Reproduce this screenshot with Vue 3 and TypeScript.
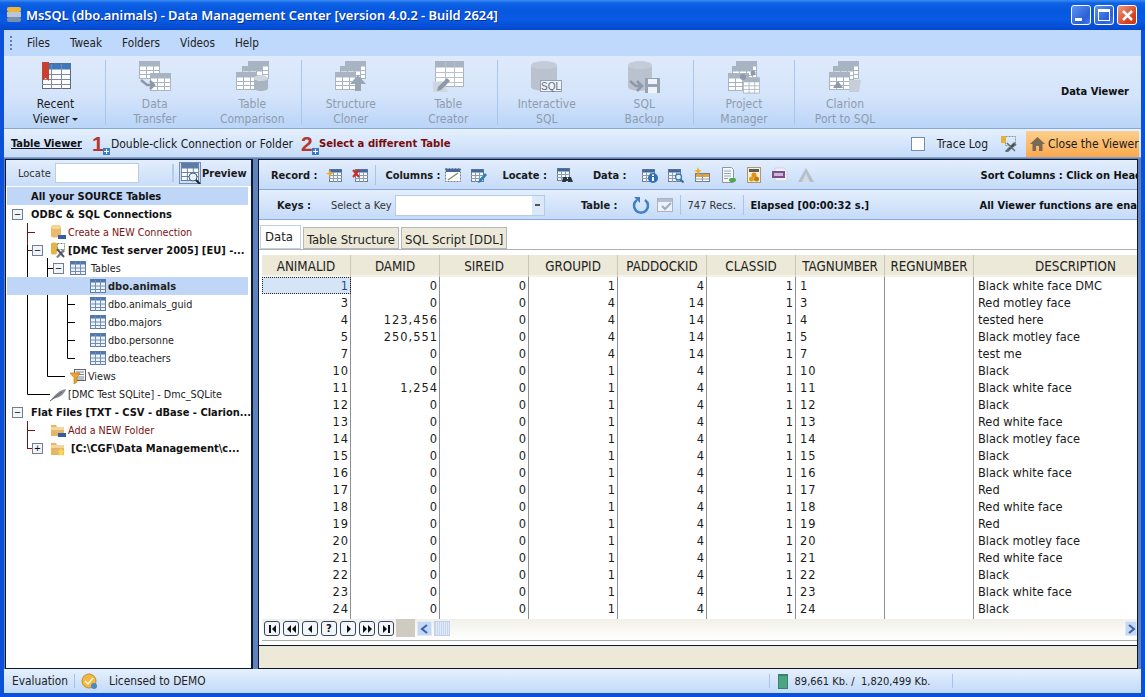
<script setup lang="ts">
interface RibbonItem {
  lines: [string, string]
  icon: string
  active?: boolean
  caret?: boolean
}

interface TreeRow {
  text: string
  x: number
  expander?: { x: number; open: boolean }
  icon?: string
  gap?: number
  kind?: 'bold' | 'link' | 'selected' | 'title'
}

const ribbonGroups: { width: number; items: RibbonItem[] }[] = [
  { width: 100, items: [{ lines: ['Recent', 'Viewer'], icon: 'r-recent', active: true, caret: true }] },
  {
    width: 196,
    items: [
      { lines: ['Data', 'Transfer'], icon: 'r-transfer' },
      { lines: ['Table', 'Comparison'], icon: 'r-compare' }
    ]
  },
  {
    width: 196,
    items: [
      { lines: ['Structure', 'Cloner'], icon: 'r-cloner' },
      { lines: ['Table', 'Creator'], icon: 'r-creator' }
    ]
  },
  {
    width: 196,
    items: [
      { lines: ['Interactive', 'SQL'], icon: 'r-sql' },
      { lines: ['SQL', 'Backup'], icon: 'r-backup' }
    ]
  },
  { width: 101, items: [{ lines: ['Project', 'Manager'], icon: 'r-project' }] },
  { width: 100, items: [{ lines: ['Clarion', 'Port to SQL'], icon: 'r-clarion' }] }
]

const treeRows: TreeRow[] = [
  { text: 'All your SOURCE Tables', x: 31, kind: 'title' },
  { text: 'ODBC & SQL Connections', x: 31, kind: 'bold', expander: { x: 12, open: true } },
  { text: 'Create a NEW Connection', x: 50, icon: 's-db', kind: 'link' },
  { text: '[DMC Test server 2005] [EU] -...', x: 50, icon: 's-server', kind: 'bold', expander: { x: 32, open: true } },
  { text: 'Tables', x: 70, icon: 's-grid', gap: 5, expander: { x: 53, open: true } },
  { text: 'dbo.animals', x: 90, icon: 's-grid', kind: 'selected' },
  { text: 'dbo.animals_guid', x: 90, icon: 's-grid' },
  { text: 'dbo.majors', x: 90, icon: 's-grid' },
  { text: 'dbo.personne', x: 90, icon: 's-grid' },
  { text: 'dbo.teachers', x: 90, icon: 's-grid' },
  { text: 'Views', x: 70, icon: 's-views' },
  { text: '[DMC Test SQLite] - Dmc_SQLite', x: 50, icon: 's-feather' },
  { text: 'Flat Files [TXT - CSV - dBase - Clarion...', x: 31, kind: 'bold', expander: { x: 12, open: true } },
  { text: 'Add a NEW Folder', x: 50, icon: 's-folder', kind: 'link' },
  { text: '[C:\\CGF\\Data Management\\c...', x: 50, icon: 's-folder-star', gap: 5, kind: 'bold', expander: { x: 32, open: false } }
]

const columns = ['ANIMALID', 'DAMID', 'SIREID', 'GROUPID', 'PADDOCKID', 'CLASSID', 'TAGNUMBER', 'REGNUMBER', 'DESCRIPTION']

const bw = 'Black white face'
const rows: [number, string, number, number, string][] = [
  [1, '0', 1, 4, 'Black white face DMC'],
  [3, '0', 4, 14, 'Red motley face'],
  [4, '123,456', 4, 14, 'tested here'],
  [5, '250,551', 4, 14, 'Black motley face'],
  [7, '0', 4, 14, 'test me'],
  [10, '0', 1, 4, 'Black'],
  [11, '1,254', 1, 4, bw],
  [12, '0', 1, 4, 'Black'],
  [13, '0', 1, 4, 'Red white face'],
  [14, '0', 1, 4, 'Black motley face'],
  [15, '0', 1, 4, 'Black'],
  [16, '0', 1, 4, bw],
  [17, '0', 1, 4, 'Red'],
  [18, '0', 1, 4, 'Red white face'],
  [19, '0', 1, 4, 'Red'],
  [20, '0', 1, 4, 'Black motley face'],
  [21, '0', 1, 4, 'Red white face'],
  [22, '0', 1, 4, 'Black'],
  [23, '0', 1, 4, bw],
  [24, '0', 1, 4, 'Black']
]

const navPaths = [
  'M1 1h2v8H1zM8 1v8L4 5z',
  'M4 1v8L0 5zM9 1v8L5 5z',
  'M6 1v8L2 5z',
  '',
  'M3 1v8l4-4z',
  'M0 1v8l4-4zM5 1v8l4-4z',
  'M1 1v8l4-4zM6 1h2v8H6z'
]
const dataIcons = ['t-info', 't-find', 't-add2', 't-doc', 't-xml', 't-csv', 't-tri']
</script>

<template>
  <div class="window">
    <svg class="sprite" width="0" height="0">
      <defs>
        <g id="tbl">
          <rect x="0.5" y="0.5" width="20" height="17" fill="#fff" stroke="currentColor" />
          <rect x="0.5" y="0.5" width="20" height="5" fill="currentColor" />
          <path d="M0 9.5h20M0 13.5h20M7.5 0v18M14.5 0v18" stroke="currentColor" fill="none" />
        </g>
        <symbol id="r-recent" viewBox="0 0 34 34">
          <rect x="3.500" y="3.500" width="28" height="25" fill="#fff" stroke="#5c6b80" />
          <rect x="3.500" y="3.500" width="28" height="6" fill="#3d78bd" />
          <path d="M3 14.500h28M3 19.500h28M3 24.500h28M12.500 4v25M22.500 4v25" stroke="#7d8a9c" fill="none" />
          <path d="M3 2h7v19l-3.500-3-3.500 3z" fill="#c8402f" />
        </symbol>
        <symbol id="r-transfer" viewBox="0 0 34 34">
          <g color="#a9b4c2"><use href="#tbl" x="1" y="1" /><use href="#tbl" x="12" y="13" /></g>
          <path d="M3 20l6 5h7M12 21l4 4-4 4" fill="none" stroke="#8d99a9" stroke-width="2.500" />
        </symbol>
        <symbol id="r-compare" viewBox="0 0 34 34">
          <g color="#a9b4c2"><use href="#tbl" x="13" y="1" /><use href="#tbl" x="7" y="6" /><use href="#tbl" x="1" y="12" /></g>
          <ellipse cx="26" cy="18" rx="7" ry="3" fill="#cfd6df" />
          <path d="M19 18v10c0 4 14 4 14 0V18c0 4-14 4-14 0z" fill="#a9b4c2" />
        </symbol>
        <symbol id="r-cloner" viewBox="0 0 34 34">
          <g color="#a9b4c2"><use href="#tbl" x="11" y="1" /><use href="#tbl" x="6" y="6" /><use href="#tbl" x="1" y="12" /></g>
          <path d="M24 15l8 9h-5v7h-6v-7h-5z" fill="#98a5b5" />
        </symbol>
        <symbol id="r-creator" viewBox="0 0 34 34">
          <rect x="4.500" y="1.500" width="28" height="25" fill="#fff" stroke="#a9b4c2" />
          <rect x="4.500" y="1.500" width="28" height="6" fill="#a9b4c2" />
          <path d="M4 12.500h28M4 17.500h28M4 22.500h28M14.500 2v25M23.500 2v25" stroke="#b8c1cd" fill="none" />
          <path d="M2 22l9-1 6 11H2z" fill="#cfd6df" />
          <path d="M7 27l9-9 3 3-9 9-4 1z" fill="#8d99a9" />
        </symbol>
        <symbol id="r-sql" viewBox="0 0 34 34">
          <ellipse cx="14" cy="5" rx="13" ry="4" fill="#c4ccd7" />
          <path d="M1 5v22c0 5 26 5 26 0V5c0 5-26 5-26 0z" fill="#b9c2ce" />
          <rect x="10.500" y="20.500" width="21" height="11" fill="#eef3f9" stroke="#94a0af" />
          <text x="21" y="30" text-anchor="middle" font-size="10" font-family="Liberation Sans" fill="#5f6c7c">SQL</text>
        </symbol>
        <symbol id="r-backup" viewBox="0 0 34 34">
          <ellipse cx="13" cy="5" rx="12" ry="4" fill="#c4ccd7" />
          <path d="M1 5v22c0 5 24 5 24 0V5c0 5-24 5-24 0z" fill="#b9c2ce" />
          <path d="M3 21l6 5h6M10 21l5 5-5 5" fill="none" stroke="#8d99a9" stroke-width="2.500" />
          <rect x="18" y="18" width="15" height="15" fill="#97a3b3" />
          <rect x="21" y="19" width="9" height="5" fill="#eef3f9" />
          <rect x="21" y="27" width="9" height="6" fill="#eef3f9" />
        </symbol>
        <symbol id="r-project" viewBox="0 0 34 34">
          <g color="#a9b4c2"><use href="#tbl" x="9" y="1" /><use href="#tbl" x="5" y="6" /><use href="#tbl" x="1" y="13" /><use href="#tbl" x="17" y="17" transform="translate(2.500 2) scale(.8 .9)" /></g>
          <circle cx="16" cy="17" r="3" fill="#8d99a9" />
          <circle cx="26" cy="13" r="2.500" fill="#8d99a9" />
        </symbol>
        <symbol id="r-clarion" viewBox="0 0 34 34">
          <g color="#a9b4c2"><use href="#tbl" x="10" y="1" /><use href="#tbl" x="5" y="6" /><use href="#tbl" x="1" y="12" /></g>
          <path d="M10 21l5 7H5z" fill="#8d99a9" />
          <path d="M21 20h12l-2 12H21z" fill="#c5ced9" />
        </symbol>
        <symbol id="s-grid" viewBox="0 0 16 16">
          <rect x=".5" y="1.500" width="15" height="13" fill="#eef3fa" stroke="#5d7ba6" />
          <rect x=".5" y="1.500" width="15" height="3" fill="#4f78ad" />
          <path d="M0 8h16M0 11.500h16M5.500 2v13M10.500 2v13" stroke="#6f8db5" fill="none" />
        </symbol>
        <symbol id="s-db" viewBox="0 0 16 16">
          <path d="M1 3c0-3 10-3 10 0v9c0 2-10 2-10 0z" fill="#eab96a" />
          <ellipse cx="6" cy="3" rx="5" ry="2" fill="#f6d89b" />
          <rect x="8" y="11" width="8" height="4" fill="#2f5fa8" />
        </symbol>
        <symbol id="s-server" viewBox="0 0 16 16">
          <path d="M1 2c0-2 6-2 6 0v9c0 2-6 2-6 0z" fill="#e7b143" />
          <rect x="7.500" y="1.500" width="7" height="6" fill="none" stroke="#6a9a6a" stroke-dasharray="2 1" />
          <path d="M6 15l7-8 2 2-7 7z" fill="#77808a" />
          <path d="M7 7l7 8" stroke="#4d565f" stroke-width="2" />
        </symbol>
        <symbol id="s-views" viewBox="0 0 16 16">
          <rect x="4.500" y="1.500" width="11" height="11" fill="#f3f5f8" stroke="#5d6570" />
          <path d="M6 4h8M6 6.500h8M6 9h8M6 11h8" stroke="#7d8792" />
          <path d="M0 5h10L7 9.500V14l-3 2V9.500z" fill="#f0a42a" stroke="#b86f0a" stroke-width=".6" />
        </symbol>
        <symbol id="s-feather" viewBox="0 0 16 16">
          <path d="M1 14C5 8 10 4 16 3c-1 4-5 8-10 9l-3 1z" fill="#8a8f96" />
          <path d="M0 15L12 6" stroke="#5d6267" />
        </symbol>
        <symbol id="s-folder" viewBox="0 0 16 16">
          <path d="M1 3h5l1 2h7v9H1z" fill="#e6b566" />
          <rect x="1" y="5" width="13" height="3" fill="#f3d59d" />
          <rect x="8" y="11" width="8" height="4" fill="#2f5fa8" />
        </symbol>
        <symbol id="s-folder-star" viewBox="0 0 16 16">
          <path d="M1 3h5l1 2h7v10H1z" fill="#e6b566" />
          <rect x="1" y="5" width="13" height="3" fill="#f3d59d" />
          <path d="M11 8l1.300 2.600 2.700.4-2 2 .5 3-2.500-1.400L8.500 16l.5-3-2-2 2.700-.4z" fill="#f8d65a" />
        </symbol>
        <g id="mini">
          <rect x="3.500" y="2.500" width="12" height="12" fill="#f4f7fb" stroke="#6c7f99" />
          <rect x="3.500" y="2.500" width="12" height="3" fill="#41679c" />
          <path d="M3 8.500h13M3 11.500h13M7.500 5v10M11.500 5v10" stroke="#8a9bb3" fill="none" />
        </g>
        <symbol id="t-add" viewBox="0 0 16 16">
          <use href="#mini" />
          <path d="M4 2l1 3.500 3 1-3 1-1 3.500-1-3.500-3-1 3-1z" fill="#f4a81c" />
        </symbol>
        <symbol id="t-del" viewBox="0 0 16 16">
          <use href="#mini" />
          <path d="M1 3l6 7M7 3l-6 7" stroke="#cf2a1f" stroke-width="2" />
        </symbol>
        <symbol id="t-col1" viewBox="0 0 16 16">
          <rect x=".5" y="1.500" width="15" height="13" fill="#fff" stroke="#6c7f99" stroke-dasharray="2 1" />
          <rect x="1" y="2" width="14" height="3" fill="#41679c" />
          <path d="M3 13l10-7" stroke="#8a9060" stroke-width="1.500" />
        </symbol>
        <symbol id="t-col2" viewBox="0 0 16 16">
          <use href="#mini" transform="translate(-3 0)" />
          <path d="M8 13l6-7 2 2-6 7-3 1z" fill="#2f7fc4" />
        </symbol>
        <symbol id="t-locate" viewBox="0 0 16 16">
          <use href="#mini" transform="translate(-3 -1)" />
          <path d="M6 10h4v2h1v-2h3l2 5h-5v-1h-2v1H5z" fill="#2a3442" />
        </symbol>
        <symbol id="t-info" viewBox="0 0 16 16">
          <use href="#mini" transform="translate(-3 0)" />
          <circle cx="11" cy="11" r="5" fill="#2c6fb8" />
          <rect x="10" y="10" width="2" height="4" fill="#fff" />
          <rect x="10" y="7.500" width="2" height="1.500" fill="#fff" />
        </symbol>
        <symbol id="t-find" viewBox="0 0 16 16">
          <use href="#mini" transform="translate(-3 0)" />
          <circle cx="10.500" cy="10" r="3" fill="#dff0fb" stroke="#3a7ab8" stroke-width="1.300" />
          <path d="M12.500 12.500l3 3" stroke="#3a6a9c" stroke-width="2" />
        </symbol>
        <symbol id="t-add2" viewBox="0 0 16 16">
          <rect x="1.500" y="6.500" width="14" height="8" fill="#fff" stroke="#6c7f99" />
          <rect x="2" y="7" width="13" height="3" fill="#e2a23a" />
          <path d="M8.500 7v8M1 12h14" stroke="#8a9bb3" />
          <path d="M4 0l1 3 3 1-3 1-1 3-1-3-3-1 3-1z" fill="#f4a81c" />
        </symbol>
        <symbol id="t-doc" viewBox="0 0 16 16">
          <path d="M2.500 .5h9l2 2v13h-11z" fill="#f5f7fa" stroke="#8c96a3" />
          <path d="M4 4h7M4 6.500h7M4 9h7M4 11.500h4" stroke="#97a3b3" />
          <rect x="9" y="11" width="7" height="4" rx="2" fill="#4aa84a" />
        </symbol>
        <symbol id="t-xml" viewBox="0 0 16 16">
          <rect x="1.500" y=".5" width="13" height="15" fill="#f9eed0" stroke="#a59a7e" />
          <rect x="3" y="2" width="10" height="3" fill="#5a5a5a" />
          <circle cx="8" cy="8" r="2.500" fill="#e48f14" />
          <circle cx="5.500" cy="12" r="2.500" fill="#d9a11e" />
          <circle cx="10.500" cy="12" r="2.500" fill="#c27a10" />
        </symbol>
        <symbol id="t-csv" viewBox="0 0 16 16">
          <path d="M3 1h9l3 3v10H3z" fill="#eceff5" stroke="#c2c8d2" stroke-width=".6" />
          <rect x="0" y="4" width="13" height="7" fill="#7e4f8f" />
          <rect x="2" y="6" width="9" height="3" fill="#cdb7d6" />
        </symbol>
        <symbol id="t-tri" viewBox="0 0 16 16">
          <path d="M8 1l8 14H0z" fill="#b4bfcd" />
          <path d="M8 6l4 9H4z" fill="#d2dae4" />
        </symbol>
        <symbol id="t-check" viewBox="0 0 16 16">
          <rect x=".5" y="1.500" width="15" height="13" fill="#eef2f8" stroke="#a8b5c6" />
          <rect x="1" y="2" width="14" height="3" fill="#b4c0d0" />
          <path d="M5 9l3 3 6-6" fill="none" stroke="#9dacc0" stroke-width="2" />
        </symbol>
      </defs>
    </svg>

    <header class="titlebar">
      <svg class="app-icon" width="18" height="18" viewBox="0 0 18 18">
        <rect x="1" y="1" width="14" height="5" rx="2" fill="#f0b43c" />
        <rect x="1" y="6" width="14" height="5" fill="#b9c6d6" />
        <rect x="1" y="11" width="14" height="5" rx="2" fill="#7b8fae" />
      </svg>
      <span class="title-text">MsSQL (dbo.animals) - Data Management Center [version 4.0.2 - Build 2624]</span>
      <div class="win-buttons">
        <button class="win-btn"><span class="min-glyph"></span></button>
        <button class="win-btn"><span class="max-glyph"></span></button>
        <button class="win-btn close">
          <svg width="13" height="13" viewBox="0 0 13 13"><path d="M2 2l9 9M11 2l-9 9" stroke="#fff" stroke-width="2.500" /></svg>
        </button>
      </div>
    </header>

    <nav class="menubar">
      <span class="grip"></span>
      <span class="menu-item">Files</span>
      <span class="menu-item">Tweak</span>
      <span class="menu-item">Folders</span>
      <span class="menu-item">Videos</span>
      <span class="menu-item">Help</span>
    </nav>

    <section class="ribbon">
      <div
        v-for="(group, g) in ribbonGroups"
        :key="g"
        class="ribbon-group"
        :class="{ last: g === ribbonGroups.length - 1 }"
        :style="{ width: group.width + 'px' }"
      >
        <div
          v-for="item in group.items"
          :key="item.icon"
          class="ribbon-item"
          :class="{ active: item.active }"
        >
          <svg class="ribbon-icon" width="34" height="34"><use :href="'#' + item.icon" /></svg>
          <span>{{ item.lines[0] }}</span>
          <span>{{ item.lines[1] }}<i v-if="item.caret" class="caret"></i></span>
        </div>
      </div>
      <span class="ribbon-caption">Data Viewer</span>
    </section>

    <section class="stepbar">
      <span class="step-title">Table Viewer</span>
      <span class="step-num first">1<i class="plus"></i></span>
      <span class="step-text">Double-click Connection or Folder</span>
      <span class="step-num second">2<i class="plus"></i></span>
      <span class="step-text alert">Select a different Table</span>
      <span class="check"></span>
      <span class="trace">Trace Log</span>
      <svg class="trace-icon" width="17" height="17" viewBox="0 0 17 17">
        <rect x="5.500" y="1.500" width="10" height="9" fill="none" stroke="#7f9a7f" stroke-dasharray="2 1" />
        <rect x="1" y="1" width="5" height="7" fill="#e6b03c" />
        <path d="M6 16l8-8 1.500 1.500-8 7zM7 8l8 8" stroke="#666e78" stroke-width="1.500" />
      </svg>
      <button class="close-viewer">
        <svg width="17" height="16" viewBox="0 0 17 16"><path d="M8.500 1L1 8h2.500v7h3.500v-5h3v5h3.500V8H16z" fill="#7a6a55" /></svg>
        Close the Viewer
      </button>
    </section>

    <main class="content">
      <aside class="left-panel">
        <div class="locate-bar">
          <span class="locate-label">Locate</span>
          <input class="locate-input" type="text" />
          <span class="locate-sep"></span>
          <svg class="preview-icon" width="22" height="22" viewBox="0 0 22 22">
            <rect x=".5" y=".5" width="21" height="21" fill="#cfe0f5" stroke="#6f8db5" />
            <g transform="translate(2 1)"><use href="#tbl" transform="scale(.85 1)" color="#5d7ba6" /></g>
            <circle cx="14" cy="15" r="4" fill="#e8f2fb" stroke="#44607f" />
            <path d="M17 18l4 4" stroke="#222" stroke-width="2" />
          </svg>
          <strong class="preview-text">Preview</strong>
        </div>
        <div class="tree">
          <svg class="tree-lines" width="80" height="300">
            <g transform="translate(-6 -186)" fill="none">
              <path d="M27.500 223v22M27 232.500h8M27 250.500h5" stroke="#7a1414" />
              <path d="M27.500 245v149.500H50M47.500 258v118.500H65M47 268.500h6M67.500 277v81.500H75M67 286.500h8M67 304.500h8M67 322.500h8M67 340.500h8" stroke="#000" />
              <path d="M27.500 421v27M27 430.500h8M27 448.500h5" stroke="#7a1414" />
            </g>
          </svg>
          <div
            v-for="row in treeRows"
            :key="row.text"
            class="tree-row"
            :class="row.kind"
            :style="{ paddingLeft: row.x - 7 + 'px' }"
          >
            <span v-if="row.expander" class="expander" :style="{ left: row.expander.x - 7 + 'px' }">
              {{ row.expander.open ? '−' : '+' }}
            </span>
            <svg
              v-if="row.icon"
              class="tree-icon"
              width="16"
              height="16"
              :style="{ marginRight: (row.gap ?? 2) + 'px' }"
            >
              <use :href="'#' + row.icon" />
            </svg>
            <span class="tree-text">{{ row.text }}</span>
          </div>
        </div>
      </aside>

      <section class="right-panel">
        <div class="toolbar">
          <b class="tool-label record">Record :</b>
          <svg class="tool after-record" width="16" height="16"><use href="#t-add" /></svg>
          <svg class="tool" width="16" height="16"><use href="#t-del" /></svg>
          <span class="tool-sep"></span>
          <b class="tool-label columns">Columns :</b>
          <svg class="tool near" width="16" height="16"><use href="#t-col1" /></svg>
          <svg class="tool" width="16" height="16"><use href="#t-col2" /></svg>
          <b class="tool-label wide">Locate :</b>
          <svg class="tool" width="16" height="16"><use href="#t-locate" /></svg>
          <b class="tool-label data-label">Data :</b>
          <svg
            v-for="(icon, n) in dataIcons"
            :key="icon"
            class="tool"
            :class="{ 'after-data': n === 0 }"
            width="16"
            height="16"
          >
            <use :href="'#' + icon" />
          </svg>
          <b class="tool-note sort">Sort Columns : Click on Header</b>
        </div>
        <div class="toolbar">
          <b class="tool-label keys">Keys :</b>
          <span class="key-label">Select a Key</span>
          <div class="key-select"><span class="key-arrow"></span></div>
          <b class="tool-label table-label">Table :</b>
          <svg class="refresh" width="18" height="18" viewBox="0 0 18 18">
            <path d="M5 4a7 7 0 1 0 8 0" fill="none" stroke="#3f7fc4" stroke-width="2.500" />
            <path d="M2 1h6v6z" fill="#3f7fc4" />
          </svg>
          <svg class="tool check-tool" width="16" height="16"><use href="#t-check" /></svg>
          <span class="tool-sep"></span>
          <span class="recs">747 Recs.</span>
          <span class="tool-sep"></span>
          <b class="elapsed">Elapsed [00:00:32 s.]</b>
          <b class="tool-note enabled">All Viewer functions are enabled</b>
        </div>

        <div class="tabs">
          <span class="tab current">Data</span>
          <span class="tab">Table Structure</span>
          <span class="tab">SQL Script [DDL]</span>
        </div>

        <div class="grid-wrap">
          <div class="grid-row head">
            <span v-for="col in columns" :key="col" class="head-cell">{{ col }}</span>
          </div>
          <div v-for="(row, i) in rows" :key="row[0]" class="grid-row" :class="{ tail: i === rows.length - 1 }">
            <span class="cell num" :class="{ focus: i === 0 }">{{ row[0] }}</span>
            <span class="cell num">{{ row[1] }}</span>
            <span class="cell num">0</span>
            <span class="cell num">{{ row[2] }}</span>
            <span class="cell num">{{ row[3] }}</span>
            <span class="cell num">1</span>
            <span class="cell tag">{{ row[0] }}</span>
            <span class="cell"></span>
            <span class="cell">{{ row[4] }}</span>
          </div>
          <div class="grid-nav">
            <div class="nav-buttons">
              <button v-for="(d, n) in navPaths" :key="n" class="nav-btn">
                <svg v-if="d" width="9" height="10" viewBox="0 0 9 10"><path :d="d" fill="#111" /></svg>
                <template v-else>?</template>
              </button>
            </div>
            <span class="nav-fill"></span>
            <span class="scroll-btn">
              <svg width="9" height="10" viewBox="0 0 9 10"><path d="M7 1L2 5l5 4" fill="none" stroke="#3d5fa8" stroke-width="2" /></svg>
            </span>
            <span class="scroll-thumb"></span>
            <span class="scroll-track"></span>
            <span class="scroll-btn end">
              <svg width="9" height="10" viewBox="0 0 9 10"><path d="M2 1l5 4-5 4" fill="none" stroke="#3d5fa8" stroke-width="2" /></svg>
            </span>
          </div>
        </div>
        <div class="bottom-panel"></div>
      </section>
    </main>

    <footer class="statusbar">
      <span class="eval">Evaluation</span>
      <span class="status-sep"></span>
      <svg class="seal" width="17" height="17" viewBox="0 0 17 17">
        <circle cx="8" cy="8" r="7" fill="#eeb94a" stroke="#c98d22" />
        <path d="M4 8l3 3 5-6" fill="none" stroke="#fff3c8" stroke-width="1.500" />
        <circle cx="13" cy="13" r="3" fill="#4a86c8" />
      </svg>
      <span class="licensed">Licensed to DEMO</span>
      <span class="status-sep mem-start"></span>
      <span class="battery"></span>
      <span class="memory">89,661 Kb. /&nbsp; 1,820,499 Kb.</span>
      <span class="status-sep mem-end"></span>
    </footer>
  </div>
</template>

<style>
html,
body {
  margin: 0;
  overflow: hidden;
}
</style>

<style scoped>
.window {
  width: 1145px;
  height: 697px;
  box-sizing: border-box;
  padding: 0 4px 4px;
  display: flex;
  flex-direction: column;
  background: #0a50d8;
  font-family: "DejaVu Sans Condensed", "Noto Sans", sans-serif;
  font-size: 12px;
  color: #1a1a1a;
  overflow: hidden;
  position: relative;
}

.sprite {
  position: absolute;
}

.titlebar {
  height: 30px;
  margin: 0 -4px;
  padding: 0 8px 0 6px;
  flex: none;
  display: flex;
  align-items: center;
  background: linear-gradient(#3b8cf2 0, #0f62e4 3px, #0658e0 10px, #0a5be4 20px, #0346cc 30px);
}

.title-text {
  margin-left: 2px;
  color: #fff;
  font-family: "Noto Sans", sans-serif;
  font-size: 12.9px;
  font-weight: 600;
  text-shadow: 1px 1px 0 #0a2f94;
  white-space: nowrap;
}

.win-buttons {
  margin-left: auto;
  display: flex;
  gap: 3px;
}

.win-btn {
  width: 20px;
  height: 20px;
  padding: 0;
  border: 1px solid #fff;
  border-radius: 3px;
  display: flex;
  align-items: center;
  justify-content: center;
  background: linear-gradient(135deg, #5f93ee, #2a5fd8 70%, #4a7ee8);
}

.win-btn.close {
  background: linear-gradient(135deg, #ee9a80, #d8401f 70%, #c8381a);
}

.min-glyph {
  width: 7px;
  height: 3px;
  margin: 9px 6px 0 0;
  background: #fff;
}

.max-glyph {
  width: 10px;
  height: 8px;
  border: 1px solid #fff;
  border-top-width: 3px;
}

.menubar {
  height: 26px;
  flex: none;
  display: flex;
  align-items: center;
  background: #bed9fb;
  font-size: 11.7px;
}

.grip {
  width: 2px;
  height: 14px;
  margin: 0 0 0 6px;
  border-left: 2px dotted #5d82b8;
}

.menu-item {
  margin-left: 20px;
  color: #222;
}

.grip + .menu-item {
  margin-left: 13px;
}

.ribbon {
  height: 73px;
  flex: none;
  box-sizing: border-box;
  display: flex;
  align-items: stretch;
  padding: 4px 0 3px 2px;
  background: linear-gradient(#dfeafb, #d4e4fa 55%, #bad5f8);
  border-bottom: 1px solid #86a9dc;
}

.ribbon-group {
  flex: none;
  display: flex;
  justify-content: space-around;
  box-sizing: border-box;
  border-right: 1px solid #a9c6ec;
}

.ribbon-group.last {
  border-right: 0;
}

.ribbon-item {
  width: 96px;
  display: flex;
  flex-direction: column;
  align-items: center;
  color: #8e9bad;
  line-height: 15px;
}

.ribbon-item.active {
  color: #1a1a1a;
}

.ribbon-icon {
  margin-bottom: 3px;
  flex: none;
}

.caret {
  display: inline-block;
  margin-left: 3px;
  vertical-align: 2px;
  border: 3px solid transparent;
  border-top-color: #222;
  border-bottom: 0;
}

.ribbon-caption {
  margin: 0 12px 0 auto;
  align-self: center;
  font-size: 11px;
  font-weight: 700;
  color: #111;
  padding-bottom: 2px;
}

.stepbar {
  height: 29px;
  flex: none;
  display: flex;
  align-items: center;
  padding: 1px 2px 0 0;
  box-sizing: border-box;
  background: linear-gradient(#e6f0fd, #c6dcfa);
  border-bottom: 1px solid #8aa0bf;
}

.step-title {
  margin-left: 7px;
  font-size: 11px;
  font-weight: 700;
  text-decoration: underline;
  color: #111;
}

.step-num {
  position: relative;
  width: 19px;
  font-family: "Liberation Sans", sans-serif;
  font-size: 21px;
  font-weight: 700;
  line-height: 24px;
  color: #b4382e;
}

.step-num.first {
  margin-left: 10px;
}

.step-num.second {
  width: 18px;
  margin-left: 8px;
}

.plus {
  position: absolute;
  left: 11px;
  bottom: 1px;
  width: 7px;
  height: 7px;
  background: linear-gradient(#fff, #fff) center / 5px 1px no-repeat, linear-gradient(#fff, #fff) center / 1px 5px no-repeat, #3d7ac4;
}

.step-text {
  color: #1a1a1a;
}

.step-text.alert {
  color: #7a0c0c;
  font-size: 11.2px;
  font-weight: 700;
}

.check {
  margin-left: auto;
  width: 12px;
  height: 12px;
  background: #fff;
  border: 1px solid #6f8db5;
}

.trace {
  margin-left: 12px;
}

.trace-icon {
  margin-left: 12px;
}

.close-viewer {
  margin-left: 9px;
  width: 113px;
  height: 26px;
  padding: 0 0 0 3px;
  border: 0;
  display: flex;
  align-items: center;
  gap: 2px;
  font: inherit;
  color: #1a1a1a;
  white-space: nowrap;
  background: linear-gradient(#fccf8c, #fba94f);
}

.content {
  flex: 1;
  min-height: 0;
  padding-top: 1px;
  display: flex;
  background: #5f82bc;
}

.left-panel {
  width: 248px;
  margin-left: 1px;
  flex: none;
  box-sizing: border-box;
  border: 2px solid #0c1830;
  border-width: 1px 2px 1px 1px;
  background: #fff;
  overflow: hidden;
  font-size: 10.7px;
}

.locate-bar {
  height: 26px;
  display: flex;
  align-items: center;
  background: linear-gradient(#e4eefc, #c9ddf9);
  font-size: 11px;
}

.locate-label {
  margin-left: 12px;
  width: 31px;
  color: #333;
}

.locate-input {
  width: 84px;
  height: 20px;
  margin-left: 6px;
  padding: 0;
  box-sizing: border-box;
  border: 1px solid #b9cee9;
  background: #fff;
}

.locate-sep {
  width: 2px;
  height: 18px;
  margin-left: 33px;
  background: #b3cdee;
}

.preview-icon {
  margin-left: 5px;
  flex: none;
}

.preview-text {
  margin-left: 1px;
  color: #1a1a1a;
}

.tree {
  position: relative;
  padding-top: 1px;
}

.tree-lines {
  position: absolute;
  top: 0;
  left: 0;
  pointer-events: none;
}

.tree-row {
  position: relative;
  height: 18px;
  display: flex;
  align-items: center;
  margin: 0 3px 0 1px;
  white-space: nowrap;
  color: #222;
}

.tree-row.title,
.tree-row.selected {
  background: #bfd6f6;
}

.tree-row.title,
.tree-row.bold {
  font-size: 11px;
  font-weight: 700;
  color: #111;
}

.tree-row.selected .tree-text {
  font-size: 11px;
  font-weight: 700;
}

.tree-row.link .tree-text {
  color: #7a1414;
}

.tree-icon {
  flex: none;
}

.expander {
  position: absolute;
  top: 4px;
  width: 9px;
  height: 9px;
  border: 1px solid #6f7f93;
  background: #f1f4f8;
  display: flex;
  align-items: center;
  justify-content: center;
  font-family: "Liberation Sans", sans-serif;
  font-size: 11px;
  font-weight: 400;
  line-height: 9px;
  color: #111;
}

.right-panel {
  width: 880px;
  margin-left: 5px;
  flex: none;
  box-sizing: border-box;
  display: flex;
  flex-direction: column;
  border: 1px solid #0c1830;
  background: #fff;
  overflow: hidden;
}

.toolbar {
  height: 30px;
  padding-top: 1px;
  flex: none;
  box-sizing: border-box;
  display: flex;
  align-items: center;
  white-space: nowrap;
  overflow: hidden;
  font-size: 11px;
  background: linear-gradient(#e4eefc, #c5dbf9);
  border-bottom: 1px solid #86a9dc;
}

.tool-label {
  color: #1a1a1a;
}

.tool-label.record {
  margin-left: 12px;
  width: 47px;
}

.tool-label.columns {
  margin-left: 2px;
  width: 55px;
}

.tool-label.wide {
  margin-left: 15px;
  width: 45px;
}

.tool-label.data-label {
  margin-left: 20px;
  width: 35px;
}

.tool {
  flex: none;
  margin-left: 10px;
}

.tool.after-record {
  margin-left: 9px;
}

.tool.near {
  margin-left: 5px;
}

.tool.after-data {
  margin-left: 15px;
}

.tool-sep {
  width: 1px;
  height: 20px;
  margin: 0 7px;
  flex: none;
  background: #a9c4e8;
}

.tool-note {
  flex: none;
  color: #111;
}

.tool-note.sort {
  margin-left: 167px;
}

.tool-note.enabled {
  margin-left: 112px;
}

.tool-label.keys {
  margin-left: 18px;
  width: 34px;
}

.key-label {
  margin-left: 20px;
  width: 58px;
  color: #333;
}

.key-select {
  width: 150px;
  height: 21px;
  margin-left: 6px;
  flex: none;
  box-sizing: border-box;
  display: flex;
  justify-content: flex-end;
  align-items: center;
  border: 1px solid #b5cce9;
  background: #fff;
}

.key-arrow {
  width: 12px;
  height: 19px;
  background: linear-gradient(#555, #555) center / 5px 2px no-repeat, #dbe8f9;
}

.tool-label.table-label {
  margin-left: 36px;
  width: 37px;
}

.refresh {
  margin-left: 14px;
  flex: none;
}

.tool.check-tool {
  margin-left: 7px;
}

.recs {
  width: 48px;
  color: #333;
}

.elapsed {
  width: 117px;
  color: #111;
}

.tabs {
  height: 30px;
  flex: none;
  box-sizing: border-box;
  display: flex;
  align-items: flex-end;
  gap: 2px;
  padding: 0 0 0 1px;
  border-bottom: 1px solid #aab0b6;
  font-size: 13px;
}

.tab {
  height: 22px;
  padding: 3px 3px 0;
  box-sizing: border-box;
  display: flex;
  align-items: center;
  border: 1px solid #b4b8ba;
  background: #ece9d8;
  color: #222;
  white-space: nowrap;
}

.tab.current {
  height: 24px;
  padding: 0 7px 1px 4px;
  background: #fff;
  border-color: #c2d0e0;
}

.grid-wrap {
  flex: none;
  margin: 5px 0 0 3px;
  overflow: hidden;
  border-bottom: 1px solid #a9aeb0;
}

.grid-row {
  display: grid;
  grid-template-columns: repeat(8, 89px) 204px;
  height: 17px;
}

.grid-row.head {
  height: 22px;
  background: #ece9d8;
  border-bottom: 2px solid #f4f3ea;
  box-sizing: border-box;
}

.grid-row.tail {
  height: 19px;
}

.head-cell {
  text-align: center;
  line-height: 23px;
  font-size: 13.3px;
  color: #222;
  border-right: 1px solid #c8c6b8;
  white-space: nowrap;
}

.cell {
  box-sizing: border-box;
  padding: 0 4px;
  font-size: 12.7px;
  line-height: 17px;
  border-right: 1px solid #8f8f8f;
  white-space: nowrap;
  color: #1a1a1a;
}

.cell:last-child {
  border-right: 0;
}

.cell.num {
  padding-right: 1px;
  text-align: right;
  letter-spacing: 1px;
}

.cell.tag {
  letter-spacing: 1px;
}

.cell.focus {
  background: #d6e4f8;
  outline: 1px dotted #222;
  outline-offset: -1px;
  color: #23518f;
}

.grid-nav {
  height: 21px;
  padding-left: 2px;
  box-sizing: border-box;
  display: flex;
  align-items: flex-start;
  background: linear-gradient(#f1f0e8, #fff);
}

.nav-buttons {
  flex: none;
  margin-top: 2px;
  display: flex;
  gap: 3px;
}

.nav-btn {
  width: 16px;
  height: 15px;
  padding: 0;
  border: 1px solid #33465e;
  border-radius: 3px;
  display: flex;
  align-items: center;
  justify-content: center;
  background: #f2f5fa;
  font-family: "DejaVu Sans", sans-serif;
  font-size: 10px;
  font-weight: 700;
  color: #111;
}

.nav-fill {
  flex: none;
  width: 19px;
  height: 18px;
  margin: 0 2px;
  background: #cfcbc0;
}

.scroll-btn {
  width: 15px;
  height: 15px;
  margin-top: 2px;
  flex: none;
  display: flex;
  align-items: center;
  justify-content: center;
  background: #c4d7f4;
  border: 1px solid #dfe9f8;
  box-sizing: border-box;
}

.scroll-btn.end {
  width: 12px;
}

.scroll-thumb {
  width: 16px;
  height: 15px;
  margin: 2px 0 0 2px;
  flex: none;
  background: repeating-linear-gradient(90deg, #c6d6ee 0 1px, #e1eaf7 1px 2px);
  border: 1px solid #c0d0e8;
  box-sizing: border-box;
}

.scroll-track {
  flex: 1;
}

.bottom-panel {
  flex: 1;
  margin-top: 4px;
  background: #ece9d8;
  border-top: 1px solid #0c1830;
}

.statusbar {
  height: 24px;
  flex: none;
  display: flex;
  align-items: center;
  font-size: 11.8px;
  background: linear-gradient(#e6f0fd, #c2daf9);
  color: #222;
}

.eval {
  margin-left: 8px;
}

.status-sep {
  width: 1px;
  height: 14px;
  margin-left: 6px;
  background: #a9c4e8;
}

.seal {
  margin-left: 6px;
}

.licensed {
  margin-left: 11px;
}

.status-sep.mem-start {
  margin-left: 563px;
}

.battery {
  width: 10px;
  height: 15px;
  margin-left: 8px;
  background: #4aa583;
  border: 1px solid #3d7f68;
  border-top-width: 2px;
  box-sizing: border-box;
}

.memory {
  margin-left: 7px;
  font-size: 11px;
}

.status-sep.mem-end {
  margin-left: 22px;
}
</style>
